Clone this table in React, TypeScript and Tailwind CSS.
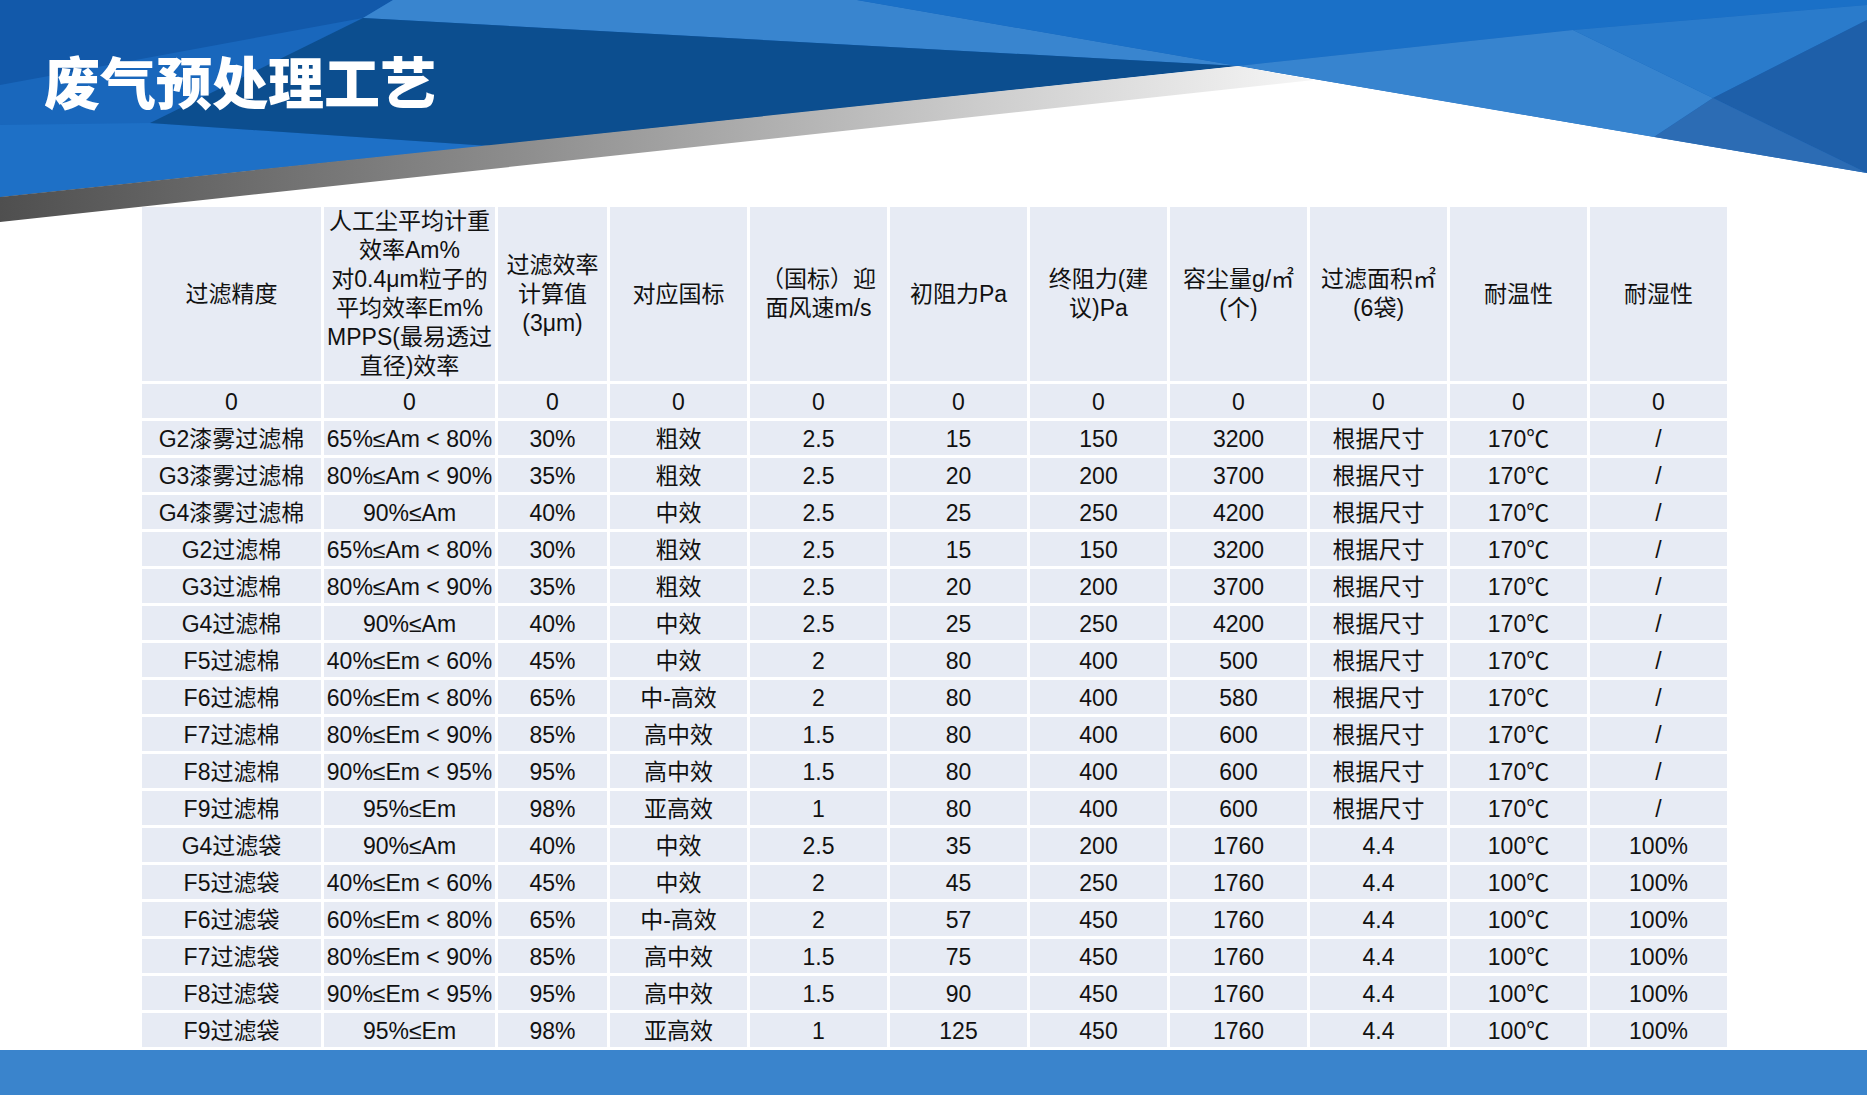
import React from 'react';

const headers: string[][] = [
  ['过滤精度'],
  ['人工尘平均计重', '效率Am%', '对0.4μm粒子的', '平均效率Em%', 'MPPS(最易透过', '直径)效率'],
  ['过滤效率', '计算值', '(3μm)'],
  ['对应国标'],
  ['（国标）迎', '面风速m/s'],
  ['初阻力Pa'],
  ['终阻力(建', '议)Pa'],
  ['容尘量g/㎡', '(个)'],
  ['过滤面积㎡', '(6袋)'],
  ['耐温性'],
  ['耐湿性'],
];

const cotton = ['根据尺寸', '170℃', '/'];
const bag = ['4.4', '100℃', '100%'];

const rows: string[][] = [
  ['0', '0', '0', '0', '0', '0', '0', '0', '0', '0', '0'],
  ['G2漆雾过滤棉', '65%≤Am < 80%', '30%', '粗效', '2.5', '15', '150', '3200', ...cotton],
  ['G3漆雾过滤棉', '80%≤Am < 90%', '35%', '粗效', '2.5', '20', '200', '3700', ...cotton],
  ['G4漆雾过滤棉', '90%≤Am', '40%', '中效', '2.5', '25', '250', '4200', ...cotton],
  ['G2过滤棉', '65%≤Am < 80%', '30%', '粗效', '2.5', '15', '150', '3200', ...cotton],
  ['G3过滤棉', '80%≤Am < 90%', '35%', '粗效', '2.5', '20', '200', '3700', ...cotton],
  ['G4过滤棉', '90%≤Am', '40%', '中效', '2.5', '25', '250', '4200', ...cotton],
  ['F5过滤棉', '40%≤Em < 60%', '45%', '中效', '2', '80', '400', '500', ...cotton],
  ['F6过滤棉', '60%≤Em < 80%', '65%', '中-高效', '2', '80', '400', '580', ...cotton],
  ['F7过滤棉', '80%≤Em < 90%', '85%', '高中效', '1.5', '80', '400', '600', ...cotton],
  ['F8过滤棉', '90%≤Em < 95%', '95%', '高中效', '1.5', '80', '400', '600', ...cotton],
  ['F9过滤棉', '95%≤Em', '98%', '亚高效', '1', '80', '400', '600', ...cotton],
  ['G4过滤袋', '90%≤Am', '40%', '中效', '2.5', '35', '200', '1760', ...bag],
  ['F5过滤袋', '40%≤Em < 60%', '45%', '中效', '2', '45', '250', '1760', ...bag],
  ['F6过滤袋', '60%≤Em < 80%', '65%', '中-高效', '2', '57', '450', '1760', ...bag],
  ['F7过滤袋', '80%≤Em < 90%', '85%', '高中效', '1.5', '75', '450', '1760', ...bag],
  ['F8过滤袋', '90%≤Em < 95%', '95%', '高中效', '1.5', '90', '450', '1760', ...bag],
  ['F9过滤袋', '95%≤Em', '98%', '亚高效', '1', '125', '450', '1760', ...bag],
];

function Banner() {
  return (
    <svg
      className="absolute top-0 left-0"
      width="1867"
      height="240"
      viewBox="0 0 1867 240"
    >
      <defs>
        <linearGradient id="band" gradientUnits="userSpaceOnUse" x1="0" y1="0" x2="1314" y2="0">
          <stop offset="0" stopColor="#4f4f4f" />
          <stop offset="0.4" stopColor="#8e8e8e" />
          <stop offset="0.75" stopColor="#cdcdcd" />
          <stop offset="1" stopColor="#f6f6f6" />
        </linearGradient>
      </defs>
      {/* base */}
      <polygon points="0,0 1867,0 1867,173 1238,66 0,197" fill="#1967bc" />
      {/* left facets */}
      <polygon points="0,0 393,0 363,18 0,85" fill="#1259aa" />
      <polygon points="0,125 150,123 490,146 0,197" fill="#1e70c6" />
      <polygon points="393,0 857,0 1238,66 363,18" fill="#3985cf" />
      <polygon points="363,18 1238,66 490,146 150,123" fill="#0c4e8f" />
      {/* right facets */}
      <polygon points="857,0 1867,0 1867,5 1573,30 1238,66" fill="#1a70c7" />
      <polygon points="1238,66 1573,30 1713,98 1654,137" fill="#3784cf" />
      <polygon points="1573,30 1867,5 1867,20 1713,98" fill="#2a7bcb" />
      <polygon points="1867,20 1713,98 1867,173" fill="#1e5fa9" />
      <polygon points="1713,98 1654,137 1867,173" fill="#2c6cb4" />
      {/* shadow band */}
      <polygon points="0,197 1238,66 1314,80 0,222" fill="url(#band)" />
    </svg>
  );
}

function Cell({ children, head }: { children: React.ReactNode; head?: boolean }) {
  return (
    <div
      className={
        'flex items-center justify-center text-center bg-[#e7ebf4] text-[#111] whitespace-nowrap ' +
        (head ? 'flex-col text-[23px] leading-[29px]' : 'pt-[3px] text-[23px] leading-none')
      }
    >
      {children}
    </div>
  );
}

export default function App() {
  return (
    <div
      className="w-[1867px] h-[1095px] bg-white flex flex-col overflow-hidden"
      style={{ fontFamily: '"Liberation Sans", "Noto Sans CJK SC", sans-serif' }}
    >
      <div className="relative h-[207px] shrink-0">
        <Banner />
        <h1
          className="relative pl-[44px] pt-[52px] text-[56px] leading-[56px] font-black text-white"
          style={{ fontFamily: '"Noto Sans CJK SC", sans-serif' }}
        >
          废气预处理工艺
        </h1>
      </div>

      <div className="relative ml-[142px] grid grid-cols-[179px_171px_109px_repeat(8,137px)] grid-rows-[174px_repeat(18,34px)] gap-[3px] w-max shrink-0">
        {headers.map((lines, i) => (
          <Cell key={'h' + i} head>
            {lines.map((l, j) => (
              <span key={j}>{l}</span>
            ))}
          </Cell>
        ))}
        {rows.map((r, i) =>
          r.map((v, j) => <Cell key={i + '-' + j}>{v}</Cell>)
        )}
      </div>

      <div className="mt-auto h-[45px] shrink-0 bg-[#3a84cc]" />
    </div>
  );
}
